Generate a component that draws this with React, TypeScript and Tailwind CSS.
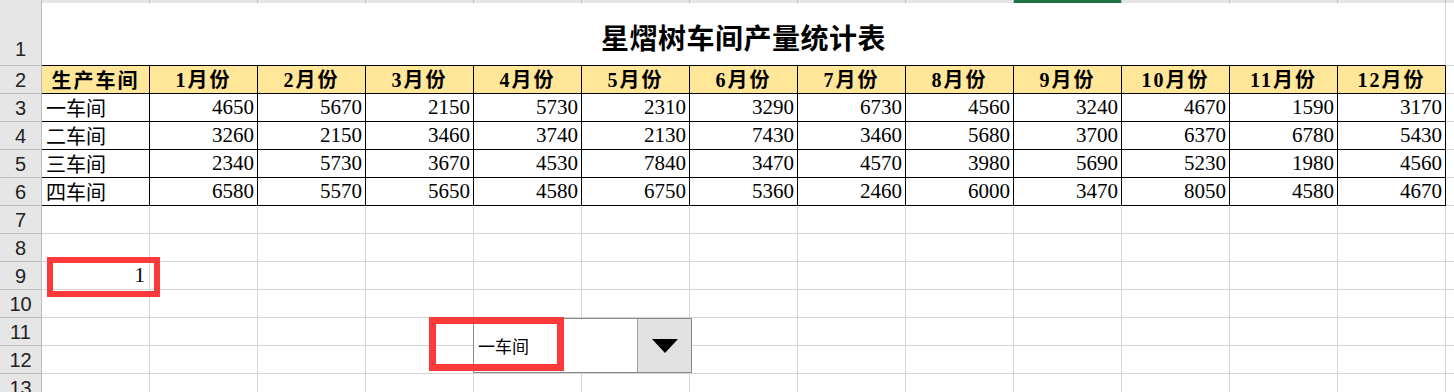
import React from 'react';

const months = ['1月份', '2月份', '3月份', '4月份', '5月份', '6月份', '7月份', '8月份', '9月份', '10月份', '11月份', '12月份'];

const data: { name: string; values: number[] }[] = [
  { name: '一车间', values: [4650, 5670, 2150, 5730, 2310, 3290, 6730, 4560, 3240, 4670, 1590, 3170] },
  { name: '二车间', values: [3260, 2150, 3460, 3740, 2130, 7430, 3460, 5680, 3700, 6370, 6780, 5430] },
  { name: '三车间', values: [2340, 5730, 3670, 4530, 7840, 3470, 4570, 3980, 5690, 5230, 1980, 4560] },
  { name: '四车间', values: [6580, 5570, 5650, 4580, 6750, 5360, 2460, 6000, 3470, 8050, 4580, 4670] },
];

const serif = { fontFamily: '"Liberation Serif", "Noto Sans CJK SC", serif' };
const cols = Array.from({ length: 13 }, (_, i) => i);

function RowHead({ n, tall }: { n: number; tall?: boolean }) {
  return (
    <div
      className={`w-[42px] shrink-0 bg-[#e6e6e6] border-r border-b border-[#bdbdbd] flex justify-center text-[20px] text-[#222] font-['Liberation_Sans',sans-serif] ${tall ? 'items-end pb-[1px]' : 'items-center'}`}
    >
      {n}
    </div>
  );
}

function EmptyRow({ n, children }: { n: number; children?: React.ReactNode }) {
  return (
    <div className="flex h-[28px]">
      <RowHead n={n} />
      {cols.map((c) => (
        <div key={c} className="w-[108px] shrink-0 border-r border-b border-[#d4d4d4] flex items-center justify-end pr-[4px] text-[21px] text-black" style={serif}>
          {c === 0 ? children : null}
        </div>
      ))}
      <div className="flex-1 border-b border-[#d4d4d4]" />
    </div>
  );
}

export default function App() {
  return (
    <div className="relative w-[1454px] h-[392px] overflow-hidden bg-white">
      {/* column header strip */}
      <div className="flex h-[3px] bg-[#e6e6e6]">
        <div className="w-[42px] shrink-0 border-r border-[#bdbdbd]" />
        {cols.map((c) => (
          <div key={c} className={`w-[108px] shrink-0 border-r border-[#bdbdbd] ${c === 9 ? 'bg-[#217346]' : ''}`} />
        ))}
        <div className="flex-1" />
      </div>

      {/* row 1: title */}
      <div className="flex h-[63px]">
        <RowHead n={1} tall />
        <div className="w-[1404px] shrink-0 border-r border-b border-r-[#d4d4d4] border-b-black flex items-center justify-center pt-[6px]">
          <span className="text-[28px] font-bold text-black tracking-[0.5px] font-['Noto_Sans_CJK_SC',sans-serif]">星熠树车间产量统计表</span>
        </div>
        <div className="flex-1 border-b border-[#d4d4d4]" />
      </div>

      {/* row 2: header */}
      <div className="flex h-[28px]">
        <RowHead n={2} />
        <div className="w-[108px] shrink-0 bg-[#ffe699] border-r border-b border-black flex items-center justify-center text-[20px] font-bold text-black tracking-[2px] font-['Noto_Sans_CJK_SC',sans-serif]">
          生产车间
        </div>
        {months.map((m) => (
          <div key={m} className="w-[108px] shrink-0 bg-[#ffe699] border-r border-b border-black flex items-center justify-center text-[20px] font-bold text-black tracking-[2px]" style={serif}>
            {m}
          </div>
        ))}
        <div className="flex-1 border-b border-[#d4d4d4]" />
      </div>

      {/* rows 3-6: data */}
      {data.map((row, i) => (
        <div key={row.name} className="flex h-[28px]">
          <RowHead n={i + 3} />
          <div className="w-[108px] shrink-0 border-r border-b border-black flex items-center pl-[4px] text-[20px] text-black font-['Noto_Sans_CJK_SC',sans-serif]">
            {row.name}
          </div>
          {row.values.map((v, j) => (
            <div key={j} className="w-[108px] shrink-0 border-r border-b border-black flex items-center justify-end pr-[3px] text-[21px] text-black" style={serif}>
              {v}
            </div>
          ))}
          <div className="flex-1 border-b border-[#d4d4d4]" />
        </div>
      ))}

      <EmptyRow n={7} />
      <EmptyRow n={8} />
      <EmptyRow n={9}>1</EmptyRow>
      <EmptyRow n={10} />
      <EmptyRow n={11} />
      <EmptyRow n={12} />
      <EmptyRow n={13} />

      {/* combo box control */}
      <div className="absolute left-[473px] top-[318px] w-[219px] h-[55px] flex border border-[#8a8a8a] bg-white">
        <div className="flex-1 flex items-center pl-[4px] text-[17px] text-black font-['Noto_Sans_CJK_SC',sans-serif]">一车间</div>
        <div className="w-[54px] h-full bg-[#e1e1e1] border-l border-[#a0a0a0] flex items-center justify-center">
          <svg width="26" height="14" viewBox="0 0 26 14">
            <polygon points="0,0 26,0 13,14" fill="#000" />
          </svg>
        </div>
      </div>

      {/* red highlight boxes */}
      <div className="absolute left-[47px] top-[257px] w-[113px] h-[40px] border-[6px] border-[#fd3a3a]" />
      <div className="absolute left-[429px] top-[317px] w-[135px] h-[54px] border-[7px] border-[#fd3a3a]" />
    </div>
  );
}
